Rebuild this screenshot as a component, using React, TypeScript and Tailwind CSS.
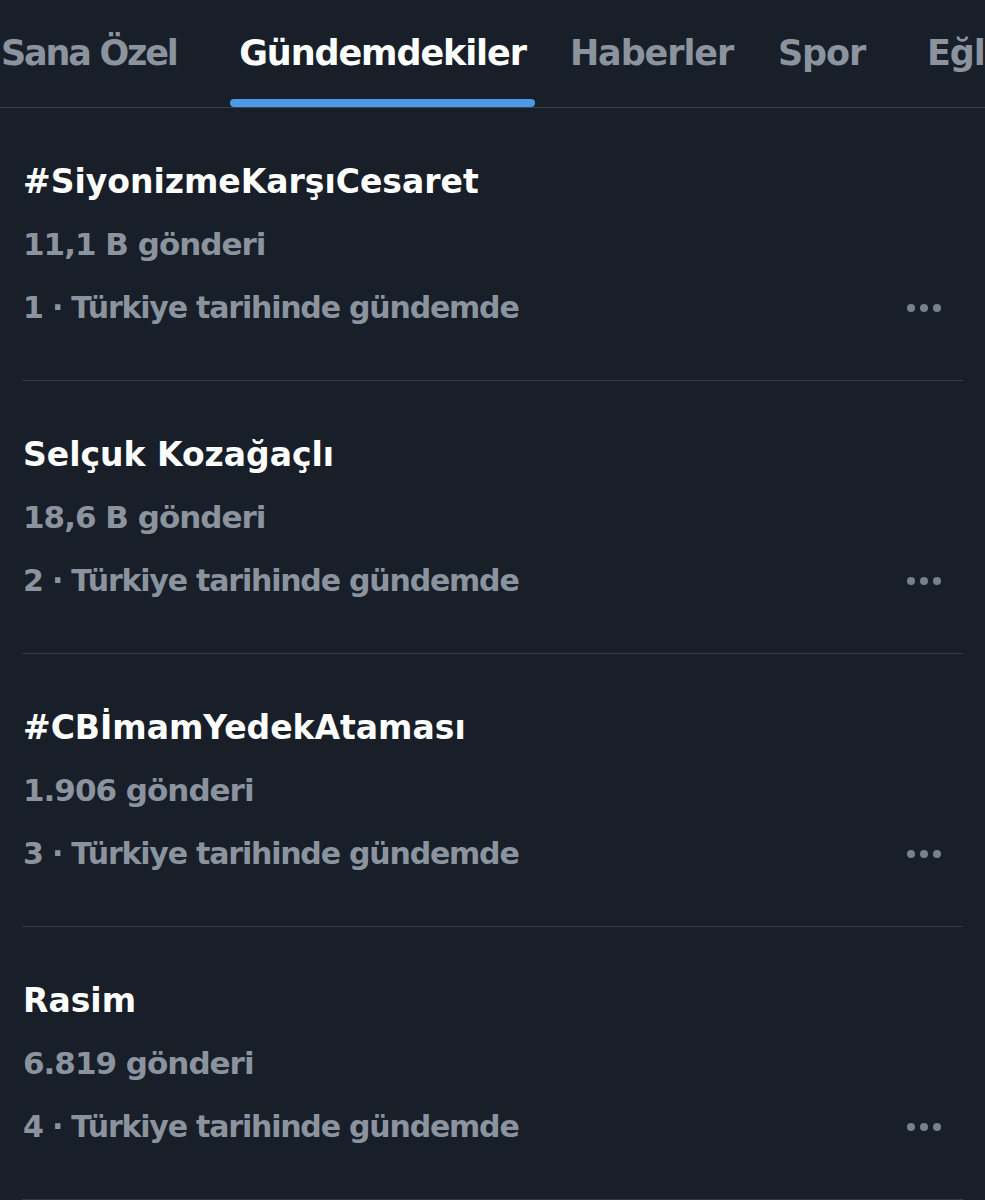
import React from "react";

const trends = [
  { rank: 1, title: "#SiyonizmeKarşıCesaret", count: "11,1 B gönderi" },
  { rank: 2, title: "Selçuk Kozağaçlı", count: "18,6 B gönderi" },
  { rank: 3, title: "#CBİmamYedekAtaması", count: "1.906 gönderi" },
  { rank: 4, title: "Rasim", count: "6.819 gönderi" },
];

function Dots() {
  return (
    <div className="flex items-center gap-[5px] mr-[22px]">
      <span className="w-[8px] h-[8px] rounded-full bg-[#77818c]" />
      <span className="w-[8px] h-[8px] rounded-full bg-[#77818c]" />
      <span className="w-[8px] h-[8px] rounded-full bg-[#77818c]" />
    </div>
  );
}

export default function App() {
  return (
    <div
      className="w-[985px] h-[1200px] overflow-hidden bg-[#181f29]"
      style={{ fontFamily: '"DejaVu Sans", "Liberation Sans", sans-serif' }}
    >
      <div className="relative h-[108px] border-b border-[#3a424c] overflow-hidden">
        <div className="flex items-center h-[107px] whitespace-nowrap text-[35px] font-bold tracking-[-1.1px]">
          <div className="w-[178px] shrink-0 pl-[1px] tracking-[-2.2px] text-[#8b949e]">Sana Özel</div>
          <div className="relative ml-[52px] w-[305px] shrink-0 h-full flex items-center justify-center text-white">
            Gündemdekiler
            <span className="absolute left-0 right-0 bottom-[0px] h-[8px] rounded-full bg-[#4a9ae8]" />
          </div>
          <div className="ml-[37px] w-[159px] shrink-0 flex justify-center text-[#8b949e]">Haberler</div>
          <div className="ml-[48px] w-[85px] shrink-0 flex justify-center text-[#8b949e]">Spor</div>
          <div className="ml-[63px] shrink-0 text-[#8b949e]">Eğlence</div>
        </div>
      </div>
      {trends.map((t) => (
        <div key={t.rank} className="mx-[22px] pt-[42px] pb-[41px] border-b border-[#333b45]">
          <div className="leading-[63px] text-[33px] font-bold text-white pl-[1px]">{t.title}</div>
          <div className="leading-[63px] text-[31px] font-bold text-[#8b949e] tracking-[-1px] pl-[1px]">{t.count}</div>
          <div className="flex items-center justify-between leading-[63px] text-[30px] font-bold text-[#8b949e] tracking-[-1.2px] pl-[1px]">
            <span>{t.rank} · Türkiye tarihinde gündemde</span>
            <Dots />
          </div>
        </div>
      ))}
    </div>
  );
}
